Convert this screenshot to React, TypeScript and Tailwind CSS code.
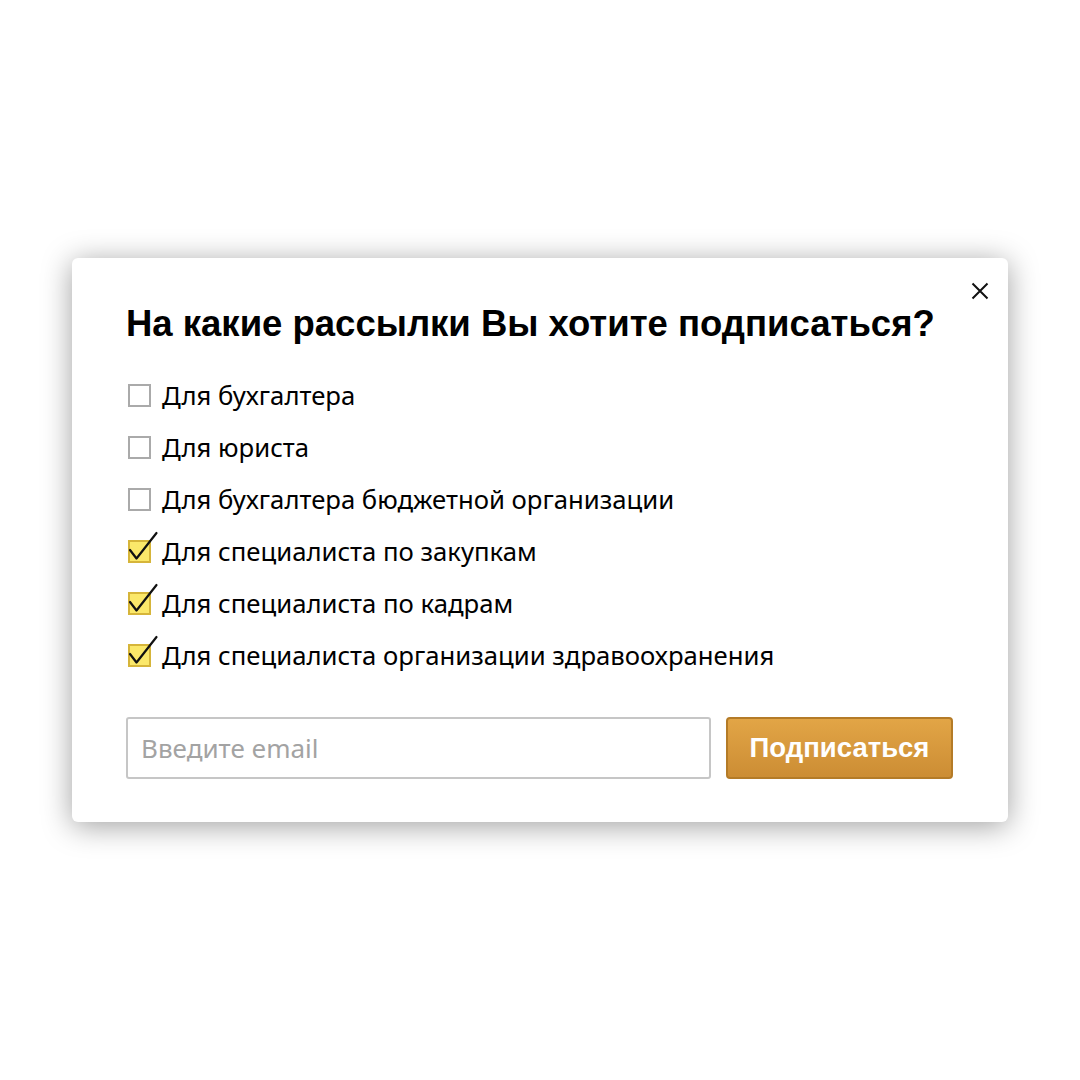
import { useState } from "react";

const lists = [
  { label: "Для бухгалтера", checked: false },
  { label: "Для юриста", checked: false },
  { label: "Для бухгалтера бюджетной организации", checked: false },
  { label: "Для специалиста по закупкам", checked: true },
  { label: "Для специалиста по кадрам", checked: true },
  { label: "Для специалиста организации здравоохранения", checked: true },
];

function Box({ checked }: { checked: boolean }) {
  if (!checked) {
    return <span className="block w-[23px] h-[23px] border-2 border-[#aaaaaa] bg-white" />;
  }
  return (
    <span className="relative block w-[23px] h-[23px] border-2 border-[#d6b53a] bg-[#fbe86a]">
      <svg className="absolute -left-[2px] -top-[11px]" width="32" height="34" viewBox="0 0 32 34" fill="none">
        <path d="M2 19 L8.5 27.5 L28.5 2" stroke="#111" strokeWidth="2.2" strokeLinecap="round" strokeLinejoin="round" />
      </svg>
    </span>
  );
}

export default function App() {
  const [items, setItems] = useState(lists);

  return (
    <div className="min-h-screen bg-white flex items-center justify-center">
      <div className="relative w-[936px] h-[564px] bg-white rounded-[6px] shadow-[0_4px_30px_rgba(0,0,0,0.38)] px-[54px] pt-[44px]">
        <button className="absolute right-[17px] top-[22px] w-[22px] h-[22px] flex items-center justify-center">
          <svg width="18" height="18" viewBox="0 0 18 18">
            <path d="M1.5 1.5 L16.5 16.5 M16.5 1.5 L1.5 16.5" stroke="#111" strokeWidth="2" />
          </svg>
        </button>

        <h2 className="font-['Liberation_Sans',Arial,sans-serif] font-bold text-[36.5px] leading-[44px] text-black whitespace-nowrap">
          На какие рассылки Вы хотите подписаться?
        </h2>

        <div className="mt-[33px] flex flex-col gap-[19px]">
          {items.map((it, i) => (
            <label
              key={it.label}
              className="flex items-center gap-[11px] h-[33px] cursor-pointer"
              onClick={() =>
                setItems(items.map((x, j) => (j === i ? { ...x, checked: !x.checked } : x)))
              }
            >
              <span className="pl-[2px]">
                <Box checked={it.checked} />
              </span>
              <span className="font-['Noto_Sans',sans-serif] text-[25.7px] text-black leading-none whitespace-nowrap">
                {it.label}
              </span>
            </label>
          ))}
        </div>

        <div className="mt-[45px] flex gap-[15px]">
          <input
            className="w-[585px] h-[62px] border-2 border-[#c6c6c6] rounded-[3px] px-[13px] font-['Noto_Sans',sans-serif] text-[26px] text-black placeholder:text-[#a3a3a3] outline-none"
            placeholder="Введите email"
          />
          <button className="w-[227px] h-[62px] rounded-[4px] border-2 border-[#b47b27] bg-gradient-to-b from-[#e2a546] to-[#cc8d34] text-white font-['Liberation_Sans',Arial,sans-serif] font-bold text-[27.5px]">
            Подписаться
          </button>
        </div>
      </div>
    </div>
  );
}
